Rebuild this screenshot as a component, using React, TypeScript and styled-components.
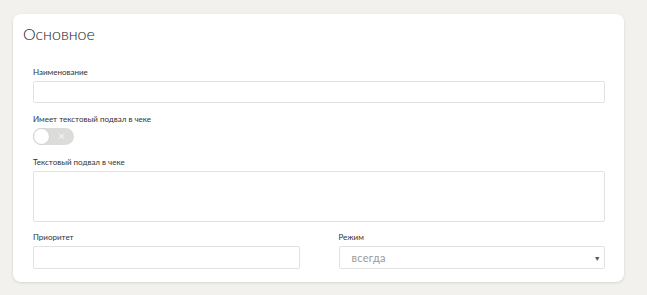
import React from "react";
import styled, { createGlobalStyle } from "styled-components";

const Global = createGlobalStyle`
  html, body { margin: 0; padding: 0; background: #f2f1ee; }
  body { font-family: Lato, "Open Sans", sans-serif; }
  * { box-sizing: border-box; }
`;

const Page = styled.div`
  width: 647px;
  height: 295px;
  padding: 14px 23px 13px 13px;
  background: #f2f1ee;
`;

const Card = styled.section`
  background: #fff;
  border-radius: 8px;
  box-shadow: 0 1px 3px rgba(0, 0, 0, 0.12);
  padding: 10px 19px 13px 20px;
  height: 268px;
`;

const Title = styled.h2`
  margin: 0 0 22px -10px;
  font-family: Lato, sans-serif;
  font-weight: 300;
  font-size: 16px;
  line-height: 20px;
  color: #222;
`;

const Field = styled.div<{ $mb?: number }>`
  display: flex;
  flex-direction: column;
  margin-bottom: ${(p) => p.$mb ?? 9}px;
`;

const Label = styled.label`
  font-size: 8px;
  line-height: 12px;
  color: #333;
  margin-bottom: 3px;
`;

const Input = styled.div<{ $h?: number }>`
  height: ${(p) => p.$h ?? 22}px;
  border: 1px solid #e2e2e2;
  border-radius: 2px;
  background: #fff;
`;

const Row = styled.div`
  display: grid;
  grid-template-columns: 1fr 1fr;
  column-gap: 39px;
`;

const Select = styled.div`
  height: 23px;
  border: 1px solid #e2e2e2;
  border-radius: 2px;
  display: flex;
  align-items: center;
  justify-content: space-between;
  padding: 0 3px 0 12px;
  font-size: 11px;
  letter-spacing: 0.3px;
  color: #999;
`;

const Arrow = styled.span`
  font-size: 7px;
  color: #555;
`;

const Toggle = styled.div`
  width: 41px;
  height: 17px;
  border-radius: 9px;
  background: #dcdcda;
  position: relative;
`;

const Knob = styled.div`
  position: absolute;
  left: 0;
  top: 0;
  width: 17px;
  height: 17px;
  border-radius: 50%;
  background: #fff;
  border: 1px solid #d0d0ce;
`;

const Cross = styled.span`
  position: absolute;
  left: 25px;
  top: 1px;
  font-size: 12px;
  line-height: 14px;
  color: #f6f6f6;
`;

export default function App() {
  return (
    <>
      <Global />
      <Page>
        <Card>
          <Title>Основное</Title>
          <Field $mb={10}>
            <Label>Наименование</Label>
            <Input $h={22} />
          </Field>
          <Field $mb={11}>
            <Label>Имеет текстовый подвал в чеке</Label>
            <Toggle>
              <Knob />
              <Cross>×</Cross>
            </Toggle>
          </Field>
          <Field $mb={9}>
            <Label>Текстовый подвал в чеке</Label>
            <Input $h={51} />
          </Field>
          <Row>
            <Field $mb={0}>
              <Label>Приоритет</Label>
              <Input $h={23} />
            </Field>
            <Field $mb={0}>
              <Label>Режим</Label>
              <Select>
                <span>всегда</span>
                <Arrow>▼</Arrow>
              </Select>
            </Field>
          </Row>
        </Card>
      </Page>
    </>
  );
}
